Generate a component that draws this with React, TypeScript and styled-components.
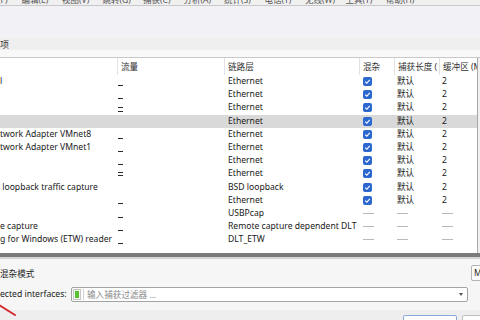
import React from 'react';
import styled, { createGlobalStyle } from 'styled-components';

const Global = createGlobalStyle`
  html, body { margin: 0; padding: 0; background: #f0f0f0; }
  body { font-family: "Noto Sans", "Noto Sans CJK SC", sans-serif; }
`;

const Root = styled.div`
  position: relative;
  width: 480px;
  height: 320px;
  overflow: hidden;
  display: flex;
  flex-direction: column;
  background: #f3f3f3;
  font-family: "Noto Sans", "Noto Sans CJK SC", sans-serif;
  font-size: 8.6px;
  color: #1e1e1e;
`;

const MenuBar = styled.div`
  flex: none;
  height: 5px;
  display: flex;
  align-items: flex-end;
  overflow: hidden;
  background: #f0f0f0;
  border-bottom: 1px solid #c8c8c8;
`;

const MenuItem = styled.span<{ $first?: boolean }>`
  flex: none;
  width: 40.5px;
  line-height: 12px;
  margin-bottom: -1px;
  margin-left: ${(p) => (p.$first ? '-19px' : '0')};
  font-size: 8.5px;
  color: #555;
  white-space: nowrap;
`;

const Toolbar = styled.div`
  flex: none;
  height: 32px;
  background: #f2f2f6;
`;

const TabStrip = styled.div`
  flex: none;
  height: 12px;
  display: flex;
  align-items: center;
  background: #efefef;
  font-size: 9px;
  color: #333;
`;

const SubStrip = styled.div`
  flex: none;
  height: 7px;
  background: #f8f8f8;
  border-bottom: 1px solid #c9c9c9;
`;

const TableArea = styled.div`
  flex: none;
  height: 195px;
  display: flex;
  background: #f0f0f0;
`;

const Table = styled.div`
  width: 477px;
  background: #fff;
  border-right: 1px solid #a8a8a8;
  display: flex;
  flex-direction: column;
`;

const COLS = '117px 107px 135px 35px 45px 38px';

const HeaderRow = styled.div`
  display: grid;
  grid-template-columns: ${COLS};
  height: 17px;
  align-items: stretch;
`;

const HeaderCell = styled.div<{ $sep?: boolean }>`
  display: flex;
  align-items: center;
  padding-left: 3px;
  border-left: ${(p) => (p.$sep ? '1px solid #e2e2e2' : 'none')};
  color: #333;
  white-space: nowrap;
  overflow: hidden;
`;

const Row = styled.div<{ $sel?: boolean }>`
  display: grid;
  grid-template-columns: ${COLS};
  height: 13.2px;
  align-items: center;
  background: ${(p) => (p.$sel ? '#d9d9d9' : 'transparent')};
`;

const Cell = styled.div<{ $pad?: number }>`
  padding-left: ${(p) => p.$pad ?? 4}px;
  white-space: pre;
  overflow: hidden;
  line-height: 13px;
  height: 13px;
  display: flex;
  align-items: center;
  color: #202020;
`;

const SparkCell = styled.div`
  height: 13px;
  padding-left: 1px;
`;

const Check = styled.span`
  width: 9px;
  height: 9px;
  border-radius: 2px;
  background: #2c67cf;
  display: inline-flex;
  align-items: center;
  justify-content: center;
`;

const Dash = styled.span`
  display: inline-block;
  width: 11px;
  height: 1px;
  background: #b9b9b9;
`;

const Splitter = styled.div`
  flex: none;
  height: 4px;
  background: #7b7b7b;
  border-bottom: 2px solid #d4d4d4;
`;

const Options = styled.div`
  flex: none;
  height: 51px;
  background: #f6f6f6;
  display: flex;
  flex-direction: column;
`;

const PromRow = styled.div`
  height: 26px;
  display: flex;
  align-items: center;
  justify-content: space-between;
  padding-top: 1px;
`;

const RightButton = styled.div`
  width: 40px;
  height: 14px;
  margin-right: -35px;
  border: 1px solid #b4b4b4;
  border-radius: 2px;
  background: #fdfdfd;
  padding-left: 2px;
  line-height: 14px;
  white-space: nowrap;
  overflow: hidden;
`;

const FilterRow = styled.div`
  height: 16px;
  display: flex;
  align-items: center;
  gap: 5px;
`;

const FilterLabel = styled.span`
  width: 66px;
  white-space: nowrap;
  color: #202020;
`;

const Combo = styled.div`
  width: 395px;
  height: 13px;
  border: 1px solid #a3a3a3;
  border-radius: 2px;
  background: #fff;
  display: flex;
  align-items: center;
`;

const Bookmark = styled.span`
  width: 8px;
  height: 11px;
  margin-left: 1px;
  border: 1px solid #c7c7c7;
  background: #eef8e8;
  display: flex;
  align-items: center;
  justify-content: center;
  box-sizing: border-box;
`;

const BookmarkFill = styled.span`
  width: 4px;
  height: 7px;
  background: #5cc036;
`;

const ComboSep = styled.span`
  width: 1px;
  height: 11px;
  background: #d0d0d0;
  margin: 0 3px 0 2px;
`;

const Placeholder = styled.span`
  flex: 1;
  color: #8a8a8a;
  white-space: nowrap;
`;

const Arrow = styled.span`
  width: 0;
  height: 0;
  border-left: 2px solid transparent;
  border-right: 2px solid transparent;
  border-top: 3px solid #555;
  margin-right: 4px;
`;

const Bottom = styled.div`
  flex: 1;
  background: #eeeeee;
  display: flex;
  justify-content: flex-end;
  align-items: flex-start;
  padding-top: 5px;
  margin-right: -36px;
  gap: 5px;
`;

const Btn = styled.div<{ $primary?: boolean }>`
  width: 52px;
  height: 16px;
  border: 1px solid ${(p) => (p.$primary ? '#86a9d8' : '#bdbdbd')};
  border-radius: 2px;
  background: #fdfdfd;
`;

const Annotation = styled.svg`
  position: absolute;
  left: 0;
  top: 302px;
`;

type R = {
  name: string;
  spark: number[];
  link: string;
  on: boolean;
  sel?: boolean;
};

const rows: R[] = [
  { name: 'l', spark: [10], link: 'Ethernet', on: true },
  { name: '', spark: [10], link: 'Ethernet', on: true },
  { name: '', spark: [6, 10], link: 'Ethernet', on: true },
  { name: '', spark: [], link: 'Ethernet', on: true, sel: true },
  { name: 'twork Adapter VMnet8', spark: [10], link: 'Ethernet', on: true },
  { name: 'twork Adapter VMnet1', spark: [10], link: 'Ethernet', on: true },
  { name: '', spark: [10], link: 'Ethernet', on: true },
  { name: '', spark: [5, 8], link: 'Ethernet', on: true },
  { name: ' loopback traffic capture', spark: [], link: 'BSD loopback', on: true },
  { name: '', spark: [9], link: 'Ethernet', on: true },
  { name: '', spark: [10], link: 'USBPcap', on: false },
  { name: 'e capture', spark: [10], link: 'Remote capture dependent DLT', on: false },
  { name: 'g for Windows (ETW) reader', spark: [10], link: 'DLT_ETW', on: false },
];

const Spark = ({ ys }: { ys: number[] }) => (
  <svg width="10" height="13" viewBox="0 0 10 13">
    {ys.map((y, i) => (
      <line key={i} x1="0" x2="5" y1={y + 0.5} y2={y + 0.5} stroke="#2a2a2a" strokeWidth="1" />
    ))}
  </svg>
);

const CheckBox = () => (
  <Check>
    <svg width="7" height="7" viewBox="0 0 7 7">
      <polyline points="1.2,3.6 2.8,5.1 5.8,1.9" fill="none" stroke="#fff" strokeWidth="1.1" />
    </svg>
  </Check>
);

const menus = ['文件(F)', '编辑(E)', '视图(V)', '跳转(G)', '捕获(C)', '分析(A)', '统计(S)', '电话(Y)', '无线(W)', '工具(T)', '帮助(H)'];

export default function App() {
  return (
    <Root>
      <Global />
      <MenuBar>
        {menus.map((m, i) => (
          <MenuItem key={m} $first={i === 0}>{m}</MenuItem>
        ))}
      </MenuBar>
      <Toolbar />
      <TabStrip>项</TabStrip>
      <SubStrip />
      <TableArea>
        <Table>
          <HeaderRow>
            <HeaderCell />
            <HeaderCell $sep>流量</HeaderCell>
            <HeaderCell $sep>链路层</HeaderCell>
            <HeaderCell $sep>混杂</HeaderCell>
            <HeaderCell $sep>捕获长度 (</HeaderCell>
            <HeaderCell $sep>缓冲区 (M</HeaderCell>
          </HeaderRow>
          {rows.map((r, i) => (
            <Row key={i} $sel={r.sel}>
              <Cell $pad={0}>{r.name}</Cell>
              <SparkCell>
                <Spark ys={r.spark} />
              </SparkCell>
              <Cell>{r.link}</Cell>
              <Cell>{r.on ? <CheckBox /> : <Dash />}</Cell>
              <Cell $pad={3}>{r.on ? '默认' : <Dash />}</Cell>
              <Cell $pad={3}>{r.on ? '2' : <Dash />}</Cell>
            </Row>
          ))}
        </Table>
      </TableArea>
      <Splitter />
      <Options>
        <PromRow>
          <span>混杂模式</span>
          <RightButton>Manage Interfaces…</RightButton>
        </PromRow>
        <FilterRow>
          <FilterLabel>ected interfaces:</FilterLabel>
          <Combo>
            <Bookmark>
              <BookmarkFill />
            </Bookmark>
            <ComboSep />
            <Placeholder>输入捕获过滤器 …</Placeholder>
            <Arrow />
          </Combo>
        </FilterRow>
      </Options>
      <Bottom>
        <Btn $primary />
        <Btn />
      </Bottom>
      <Annotation width="20" height="18" viewBox="0 0 20 18">
        <line x1="-1" y1="3" x2="15" y2="13" stroke="#d22a2f" strokeWidth="2" strokeLinecap="round" />
      </Annotation>
    </Root>
  );
}
